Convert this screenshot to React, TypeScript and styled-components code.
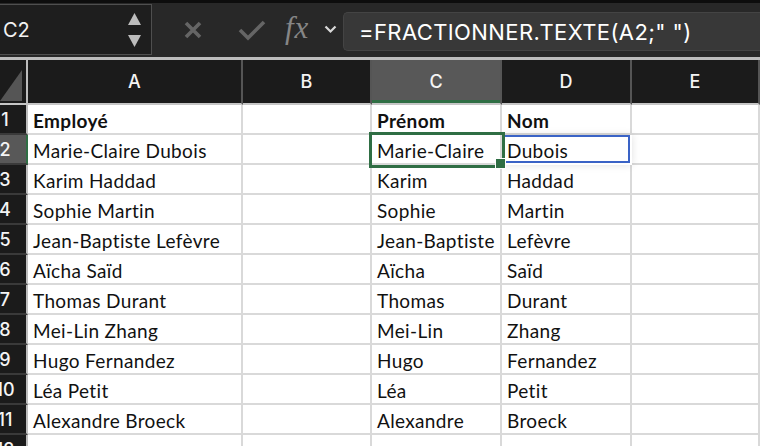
import React from 'react';
import styled, { createGlobalStyle, css } from 'styled-components';

const GlobalStyle = createGlobalStyle`
  html, body {
    margin: 0;
    padding: 0;
    background: #ffffff;
    overflow: hidden;
  }
  * { box-sizing: border-box; }
`;

const GREEN = '#2f6e44';
const COLS = ['A', 'B', 'C', 'D', 'E'];

const rows: string[][] = [
  ['Employé', '', 'Prénom', 'Nom', ''],
  ['Marie-Claire Dubois', '', 'Marie-Claire', 'Dubois', ''],
  ['Karim Haddad', '', 'Karim', 'Haddad', ''],
  ['Sophie Martin', '', 'Sophie', 'Martin', ''],
  ['Jean-Baptiste Lefèvre', '', 'Jean-Baptiste', 'Lefèvre', ''],
  ['Aïcha Saïd', '', 'Aïcha', 'Saïd', ''],
  ['Thomas Durant', '', 'Thomas', 'Durant', ''],
  ['Mei-Lin Zhang', '', 'Mei-Lin', 'Zhang', ''],
  ['Hugo Fernandez', '', 'Hugo', 'Fernandez', ''],
  ['Léa Petit', '', 'Léa', 'Petit', ''],
  ['Alexandre Broeck', '', 'Alexandre', 'Broeck', ''],
  ['', '', '', '', ''],
];

const Page = styled.div`
  width: 760px;
  height: 446px;
  overflow: hidden;
  background: #ffffff;
`;

const Toolbar = styled.div`
  height: 60px;
  display: flex;
  align-items: flex-start;
  background: #282828;
  border-top: 3px solid #0d0d0d;
  border-bottom: 3px solid #bdbdbd;
  padding-top: 1px;
`;

const NameBox = styled.div`
  width: 152px;
  height: 51px;
  flex: none;
  display: flex;
  align-items: center;
  justify-content: space-between;
  padding: 0 10px 0 3px;
  background: #1e1e1e;
  border: 1px solid #4f4f4f;
  border-left: none;
  color: #f2f2f2;
  font-family: Inter, 'Liberation Sans', sans-serif;
  font-size: 20px;
`;

const Stepper = styled.div`
  display: flex;
  flex-direction: column;
  gap: 10px;
`;

const ActionIcons = styled.div`
  display: flex;
  align-items: center;
  height: 51px;
  padding-left: 31px;
`;

const IconSlot = styled.span<{ $w: number; $ml?: number; $mr: number }>`
  display: flex;
  align-items: center;
  flex: none;
  width: ${(p) => p.$w}px;
  margin-left: ${(p) => p.$ml ?? 0}px;
  margin-right: ${(p) => p.$mr}px;
`;

const Fx = styled.span`
  flex: none;
  width: 30px;
  font-family: 'Liberation Serif', 'DejaVu Serif', serif;
  font-style: italic;
  font-size: 31px;
  color: #868686;
  letter-spacing: 1px;
  margin-top: -4px;
`;

const FormulaInput = styled.div`
  flex: 1;
  height: 39px;
  margin-top: 8px;
  display: flex;
  align-items: center;
  padding-left: 15px;
  background: #383838;
  border: 1px solid #444;
  border-right: none;
  border-radius: 5px 0 0 5px;
  color: #ffffff;
  font-family: Inter, 'Liberation Sans', sans-serif;
  font-size: 22px;
  letter-spacing: 0.4px;
  white-space: nowrap;
`;

const Grid = styled.div`
  display: grid;
  grid-template-columns: 28px 215px 129px 130px 130px 1fr;
  grid-auto-rows: 30px;
  grid-template-rows: 45px;
`;

const Corner = styled.div`
  background: #1b1b1b;
  border-right: 2px solid #bdbdbd;
  border-bottom: 2px solid #c6c6c6;
  display: flex;
  align-items: flex-end;
  padding: 0 4px 2px 0;
`;

const ColHead = styled.div<{ $active?: boolean }>`
  display: flex;
  align-items: center;
  justify-content: center;
  background: ${(p) => (p.$active ? '#585858' : '#1b1b1b')};
  border-right: 2px solid #555;
  border-bottom: 2px solid #c6c6c6;
  color: #f4f4f4;
  font-family: Inter, 'Liberation Sans', sans-serif;
  font-weight: 500;
  font-size: 18px;
  ${(p) =>
    p.$active &&
    css`
      box-shadow: inset 0 -3px 0 ${GREEN};
    `}
`;

const RowHead = styled.div<{ $active?: boolean }>`
  display: flex;
  align-items: center;
  overflow: hidden;
  background: ${(p) => (p.$active ? '#585858' : '#1b1b1b')};
  border-right: 2px solid ${(p) => (p.$active ? GREEN : '#bdbdbd')};
  border-bottom: 2px solid #3a3a3a;
  color: #f4f4f4;
  font-family: Inter, 'Liberation Sans', sans-serif;
  font-weight: 500;
  font-size: 18px;
`;

const RowNum = styled.span`
  flex: none;
  width: 28px;
  margin-left: -9px;
  text-align: center;
`;

const Cell = styled.div<{ $bold?: boolean; $sel?: 'active' | 'ref' }>`
  position: relative;
  display: flex;
  align-items: center;
  padding: 2px 0 0 5px;
  white-space: nowrap;
  background: #ffffff;
  border-right: 2px solid #d9d9d9;
  border-bottom: 2px solid #d9d9d9;
  color: #111111;
  font-family: Lato, 'Open Sans', sans-serif;
  font-size: 19px;
  letter-spacing: 0.35px;
  font-weight: ${(p) => (p.$bold ? 700 : 400)};
  ${(p) =>
    p.$sel === 'active' &&
    css`
      z-index: 2;
      outline: 3px solid ${GREEN};
      outline-offset: 0px;
      &::after {
        content: '';
        position: absolute;
        right: -6px;
        bottom: -6px;
        width: 9px;
        height: 9px;
        background: ${GREEN};
        border: 1px solid #ffffff;
      }
    `}
  ${(p) =>
    p.$sel === 'ref' &&
    css`
      z-index: 1;
      box-shadow: inset 0 0 0 2px #3a63c6, 0 0 8px rgba(0, 0, 0, 0.12);
      border-color: transparent;
    `}
`;

const Triangle = () => (
  <svg width="22" height="31" viewBox="0 0 22 31">
    <polygon points="22,0 22,31 0,31" fill="#555555" />
  </svg>
);

const App: React.FC = () => {
  return (
    <Page>
      <GlobalStyle />
      <Toolbar>
        <NameBox>
          <span>C2</span>
          <Stepper>
            <svg width="13" height="12" viewBox="0 0 13 12">
              <polygon points="6.5,0 13,12 0,12" fill="#bdbdbd" />
            </svg>
            <svg width="13" height="12" viewBox="0 0 13 12">
              <polygon points="0,0 13,0 6.5,12" fill="#bdbdbd" />
            </svg>
          </Stepper>
        </NameBox>
        <ActionIcons>
          <IconSlot $w={20} $mr={35}>
            <svg width="20" height="20" viewBox="0 0 20 20">
              <path d="M3 3 L17 17 M17 3 L3 17" stroke="#656565" strokeWidth="3.6" strokeLinecap="butt" />
            </svg>
          </IconSlot>
          <IconSlot $w={28} $mr={19}>
            <svg width="28" height="22" viewBox="0 0 28 22">
              <path d="M2 11 L10 19 L26 3" stroke="#656565" strokeWidth="3.6" fill="none" />
            </svg>
          </IconSlot>
          <Fx>fx</Fx>
          <IconSlot $w={13} $ml={9} $mr={6}>
            <svg width="13" height="9" viewBox="0 0 13 9">
              <path d="M1.5 1.5 L6.5 6.5 L11.5 1.5" stroke="#d8d8d8" strokeWidth="2.2" fill="none" />
            </svg>
          </IconSlot>
        </ActionIcons>
        <FormulaInput>=FRACTIONNER.TEXTE(A2;" ")</FormulaInput>
      </Toolbar>
      <Grid>
        <Corner>
          <Triangle />
        </Corner>
        {COLS.map((c) => (
          <ColHead key={c} $active={c === 'C'}>
            {c}
          </ColHead>
        ))}
        {rows.map((r, i) => (
          <React.Fragment key={i}>
            <RowHead $active={i === 1}>
              <RowNum>{i + 1}</RowNum>
            </RowHead>
            {r.map((v, j) => (
              <Cell
                key={j}
                $bold={i === 0}
                $sel={i === 1 && j === 2 ? 'active' : i === 1 && j === 3 ? 'ref' : undefined}
              >
                {v}
              </Cell>
            ))}
          </React.Fragment>
        ))}
      </Grid>
    </Page>
  );
};

export default App;
